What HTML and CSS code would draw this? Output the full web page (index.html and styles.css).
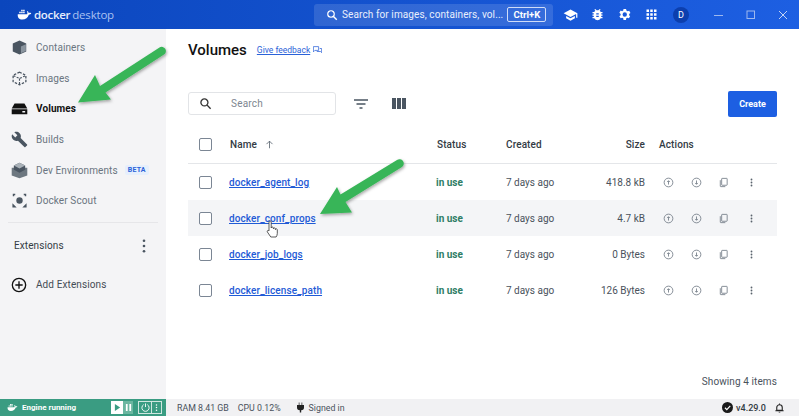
FILE: index.html
```html
<!DOCTYPE html>
<html lang="en">
<head>
<meta charset="utf-8">
<title>Docker Desktop - Volumes</title>
<link rel="stylesheet" href="styles.css">
</head>
<body>
<div class="app">
  <header class="topbar">
    <div class="brand">
      <svg class="whale" viewBox="0 0 20 14" width="15" height="11"><path fill="#fff" d="M1 6.500h12.600c.5-1.200.3-2.500-.4-3.500l.6-.6c1 .6 1.600 1.500 1.800 2.600 1-.4 2.300-.4 3.400.3-.6 1.300-1.800 1.900-3.300 1.900C14.700 11 11.500 13.500 7 13.500 3 13.500.6 11 1 6.500z"/><path fill="#fff" d="M3 3.200h2v2H3zM5.600 3.200h2v2h-2zM8.200 3.200h2v2h-2zM5.600.8h2v2h-2zM8.200.8h2v2h-2z"/></svg>
      <span class="brand-docker">docker</span><span class="brand-desktop">desktop</span>
    </div>
    <div class="searchbox">
      <svg class="ico" viewBox="0 0 24 24" width="12" height="12"><circle cx="10" cy="10" r="6.500" fill="none" stroke="#fff" stroke-width="2.400"/><path d="M14.500 14.500L21.500 21.500" stroke="#fff" stroke-width="2.800"/></svg>
      <span class="search-text">Search for images, containers, vol...</span>
      <span class="kbd">Ctrl+K</span>
    </div>
    <div class="top-icons">
      <svg viewBox="0 0 24 24" width="15" height="15"><path fill="#fff" d="M12 4L1 10l11 6 9-4.900V17h2v-7zM5 14.200v3.800l7 3.800 7-3.800v-3.800l-7 3.800z"/></svg>
      <svg viewBox="0 0 24 24" width="15" height="15"><path fill="#fff" d="M20 8h-2.800a6 6 0 0 0-1.800-2l1.600-1.600L15.600 3l-2.200 2.200a6 6 0 0 0-2.800 0L8.400 3 7 4.400 8.600 6a6 6 0 0 0-1.800 2H4v2h2.100a7 7 0 0 0 0 2H4v2h2.100c0 .7 0 1.300.1 2H4v2h2.800a6 6 0 0 0 10.400 0H20v-2h-2.200c.1-.7.200-1.300.2-2h2v-2h-2a7 7 0 0 0-.1-2H20zm-6 8h-4v-2h4zm0-4h-4v-2h4z"/></svg>
      <svg viewBox="0 0 24 24" width="15" height="15"><path fill="#fff" d="M19.400 13c0-.3.100-.7.100-1s0-.7-.1-1l2.100-1.600-2-3.500-2.500 1a7 7 0 0 0-1.700-1L14.400 3h-4l-.4 2.700a7 7 0 0 0-1.700 1l-2.500-1-2 3.500L5.900 11c0 .3-.1.700-.1 1s0 .7.100 1l-2.100 1.600 2 3.500 2.500-1a7 7 0 0 0 1.700 1l.4 2.700h4l.4-2.700a7 7 0 0 0 1.700-1l2.500 1 2-3.500zM12.400 15.500a3.500 3.500 0 1 1 0-7 3.500 3.500 0 0 1 0 7z"/></svg>
      <svg viewBox="0 0 24 24" width="15" height="15"><path fill="#fff" d="M4 4h4v4H4zM10 4h4v4h-4zM16 4h4v4h-4zM4 10h4v4H4zM10 10h4v4h-4zM16 10h4v4h-4zM4 16h4v4H4zM10 16h4v4h-4zM16 16h4v4h-4z"/></svg>
      <span class="avatar">D</span>
    </div>
    <div class="win-controls">
      <svg viewBox="0 0 12 12" width="12" height="12"><path d="M1 6.500h9" stroke="#9db8ee" stroke-width="1"/></svg>
      <svg viewBox="0 0 12 12" width="12" height="12"><rect x="2" y="2" width="7.500" height="7.500" fill="none" stroke="#9db8ee"/></svg>
      <svg viewBox="0 0 12 12" width="12" height="12"><path d="M2 2l8 8M10 2l-8 8" stroke="#c3d4f5" stroke-width="1"/></svg>
    </div>
  </header>

  <div class="middle">
    <aside class="sidebar">
      <nav class="nav">
        <a class="nav-item">
          <svg viewBox="0 0 24 24" width="17" height="17"><path fill="#4a5561" d="M12 2l9.500 4.500v11L12 22l-9.500-4.500v-11z"/><path fill="#8a949e" d="M14 10.500l7-3.200v9.500l-7 3.400z"/></svg>
          <span>Containers</span>
        </a>
        <a class="nav-item">
          <svg viewBox="0 0 24 24" width="17" height="17"><path fill="none" stroke="#4a5561" stroke-width="1.800" stroke-dasharray="3.500 2" d="M12 3l9 4.500v9L12 21l-9-4.500v-9z"/><path fill="none" stroke="#4a5561" stroke-width="1.600" stroke-dasharray="3 2" d="M3.500 8l8.500 4 8.500-4M12 12v8"/></svg>
          <span>Images</span>
        </a>
        <a class="nav-item active">
          <svg viewBox="0 0 24 24" width="17" height="17"><path fill="#111" d="M5 5h14l4 7H1z"/><path fill="#111" d="M1 13h22v7H1zM16 15.500v2h4v-2z" fill-rule="evenodd"/></svg>
          <span>Volumes</span>
        </a>
        <a class="nav-item">
          <svg viewBox="0 0 24 24" width="17" height="17"><path fill="#4a5561" d="M22.700 19l-9.100-9.100c.9-2.300.4-5-1.500-6.900-2-2-5-2.400-7.400-1.300L9 6 6 9 1.600 4.700C.4 7.100.9 10.100 2.900 12.100c1.900 1.900 4.600 2.400 6.900 1.500l9.100 9.100c.4.400 1 .4 1.400 0l2.300-2.300c.5-.4.500-1.100.1-1.400z"/></svg>
          <span>Builds</span>
        </a>
        <a class="nav-item">
          <svg viewBox="0 0 24 24" width="17" height="17"><path fill="#6d7780" d="M1 8h22v11l-11 4-11-4z"/><path fill="#4a5561" d="M12 1l8 4v6l-8 4-8-4V5z"/><path fill="#a9b1b8" d="M12 1l8 4-8 4-8-4z"/></svg>
          <span>Dev Environments</span>
          <span class="beta">BETA</span>
        </a>
        <a class="nav-item">
          <svg viewBox="0 0 24 24" width="17" height="17"><circle cx="12" cy="12" r="4.500" fill="#4a5561"/><path fill="none" stroke="#4a5561" stroke-width="2" d="M6 3.500H3.500V6M18 3.500h2.500V6"/><path fill="#4a5561" d="M2 22v-6l6 6zM22 22v-6l-6 6z"/></svg>
          <span>Docker Scout</span>
        </a>
      </nav>
      <hr class="divider">
      <div class="ext-head">
        <span>Extensions</span>
        <svg viewBox="0 0 4 16" width="4" height="14"><circle cx="2" cy="2" r="1.500" fill="#4a5561"/><circle cx="2" cy="8" r="1.500" fill="#4a5561"/><circle cx="2" cy="14" r="1.500" fill="#4a5561"/></svg>
      </div>
      <a class="add-ext">
        <svg viewBox="0 0 24 24" width="16" height="16"><circle cx="12" cy="12" r="10" fill="none" stroke="#111" stroke-width="2"/><path d="M12 6.500v11M6.500 12h11" stroke="#111" stroke-width="2"/></svg>
        <span>Add Extensions</span>
      </a>
    </aside>

    <main class="content">
      <div class="title-row">
        <h1>Volumes</h1>
        <a class="feedback">Give feedback</a>
        <svg class="fb-ico" viewBox="0 0 12 10" width="9" height="8"><path fill="none" stroke="#2b62d8" d="M.5.500h7v5h-5l-2 2zM9 3h2.500v5.500l-1.500-1.500H5"/></svg>
      </div>
      <div class="toolbar">
        <div class="search">
          <svg viewBox="0 0 24 24" width="13" height="13"><circle cx="10" cy="10" r="6.500" fill="none" stroke="#333" stroke-width="2.400"/><path d="M15 15l6.500 6.500" stroke="#333" stroke-width="2.600"/></svg>
          <span>Search</span>
        </div>
        <svg class="tool-filter" viewBox="0 0 14 10" width="14" height="10"><path d="M0 1h14M2.500 5h9M5.500 9h3" stroke="#4a5561" stroke-width="1.300"/></svg>
        <svg class="tool-cols" viewBox="0 0 14 11" width="14" height="11"><path fill="#4a5561" d="M0 0h4v11H0zM5 0h4v11H5zM10 0h4v11h-4z"/></svg>
        <button class="create">Create</button>
      </div>

      <div class="table">
        <div class="row head">
          <span class="check"></span>
          <span class="name-h">Name <svg viewBox="0 0 12 12" width="9" height="9"><path d="M6 11V1.500M2 5.500l4-4 4 4" fill="none" stroke="#5a6570" stroke-width="1.100"/></svg></span>
          <span class="status-h">Status</span>
          <span>Created</span>
          <span class="size">Size</span>
          <span class="actions-h">Actions</span>
        </div>
        <div class="row">
          <span class="check"></span>
          <a class="vol">docker_agent_log</a>
          <span class="inuse">in use</span>
          <span class="cell">7 days ago</span>
          <span class="size cell">418.8 kB</span>
          <span class="actions">
            <svg viewBox="0 0 24 24"><circle cx="12" cy="12" r="9.500" class="a"/><path d="M12 16.500v-8M9 11l3-3 3 3" class="a"/></svg>
            <svg viewBox="0 0 24 24"><circle cx="12" cy="12" r="9.500" class="a"/><path d="M12 7.500v8M9 13l3 3 3-3" class="a"/></svg>
            <svg viewBox="0 0 24 24"><rect x="8" y="3" width="12" height="15" rx="1" class="a"/><path d="M5 7v13a1 1 0 0 0 1 1h10" class="a"/></svg>
            <svg viewBox="0 0 24 24"><circle cx="12" cy="5.500" r="2" class="d"/><circle cx="12" cy="12" r="2" class="d"/><circle cx="12" cy="18.500" r="2" class="d"/></svg>
          </span>
        </div>
        <div class="row shaded">
          <span class="check"></span>
          <a class="vol">docker_conf_props</a>
          <span class="inuse">in use</span>
          <span class="cell">7 days ago</span>
          <span class="size cell">4.7 kB</span>
          <span class="actions">
            <svg viewBox="0 0 24 24"><circle cx="12" cy="12" r="9.500" class="a"/><path d="M12 16.500v-8M9 11l3-3 3 3" class="a"/></svg>
            <svg viewBox="0 0 24 24"><circle cx="12" cy="12" r="9.500" class="a"/><path d="M12 7.500v8M9 13l3 3 3-3" class="a"/></svg>
            <svg viewBox="0 0 24 24"><rect x="8" y="3" width="12" height="15" rx="1" class="a"/><path d="M5 7v13a1 1 0 0 0 1 1h10" class="a"/></svg>
            <svg viewBox="0 0 24 24"><circle cx="12" cy="5.500" r="2" class="d"/><circle cx="12" cy="12" r="2" class="d"/><circle cx="12" cy="18.500" r="2" class="d"/></svg>
          </span>
        </div>
        <div class="row">
          <span class="check"></span>
          <a class="vol">docker_job_logs</a>
          <span class="inuse">in use</span>
          <span class="cell">7 days ago</span>
          <span class="size cell">0 Bytes</span>
          <span class="actions">
            <svg viewBox="0 0 24 24"><circle cx="12" cy="12" r="9.500" class="a"/><path d="M12 16.500v-8M9 11l3-3 3 3" class="a"/></svg>
            <svg viewBox="0 0 24 24"><circle cx="12" cy="12" r="9.500" class="a"/><path d="M12 7.500v8M9 13l3 3 3-3" class="a"/></svg>
            <svg viewBox="0 0 24 24"><rect x="8" y="3" width="12" height="15" rx="1" class="a"/><path d="M5 7v13a1 1 0 0 0 1 1h10" class="a"/></svg>
            <svg viewBox="0 0 24 24"><circle cx="12" cy="5.500" r="2" class="d"/><circle cx="12" cy="12" r="2" class="d"/><circle cx="12" cy="18.500" r="2" class="d"/></svg>
          </span>
        </div>
        <div class="row">
          <span class="check"></span>
          <a class="vol">docker_license_path</a>
          <span class="inuse">in use</span>
          <span class="cell">7 days ago</span>
          <span class="size cell">126 Bytes</span>
          <span class="actions">
            <svg viewBox="0 0 24 24"><circle cx="12" cy="12" r="9.500" class="a"/><path d="M12 16.500v-8M9 11l3-3 3 3" class="a"/></svg>
            <svg viewBox="0 0 24 24"><circle cx="12" cy="12" r="9.500" class="a"/><path d="M12 7.500v8M9 13l3 3 3-3" class="a"/></svg>
            <svg viewBox="0 0 24 24"><rect x="8" y="3" width="12" height="15" rx="1" class="a"/><path d="M5 7v13a1 1 0 0 0 1 1h10" class="a"/></svg>
            <svg viewBox="0 0 24 24"><circle cx="12" cy="5.500" r="2" class="d"/><circle cx="12" cy="12" r="2" class="d"/><circle cx="12" cy="18.500" r="2" class="d"/></svg>
          </span>
        </div>
      </div>
      <div class="showing">Showing 4 items</div>
    </main>
  </div>

  <footer class="statusbar">
    <div class="engine">
      <svg viewBox="0 0 20 14" width="11" height="9"><path fill="#fff" d="M1 6.500h12.600c.5-1.200.3-2.500-.4-3.500l.6-.6c1 .6 1.600 1.500 1.800 2.600 1-.4 2.300-.4 3.400.3-.6 1.300-1.800 1.900-3.300 1.900C14.700 11 11.500 13.500 7 13.500 3 13.500.6 11 1 6.500z"/><path fill="#fff" d="M3 3.200h2v2H3zM5.600 3.200h2v2h-2zM8.200 3.200h2v2h-2zM5.600.8h2v2h-2zM8.200.8h2v2h-2z"/></svg>
      <span class="engine-text">Engine running</span>
      <div class="eng-btns">
        <span class="eb play"><svg viewBox="0 0 8 8" width="7" height="7"><path fill="#3a9c82" d="M1 0l6 4-6 4z"/></svg></span>
        <span class="eb pause"><svg viewBox="0 0 8 8" width="7" height="7"><path fill="#fff" d="M1 0h2v8H1zM5 0h2v8H5z"/></svg></span>
      </div>
      <div class="eng-btns outlined">
        <span class="eb"><svg viewBox="0 0 10 10" width="9" height="9"><path fill="none" stroke="#fff" d="M3 1.800a4 4 0 1 0 4 0M5 .5v4"/></svg></span>
        <span class="eb sep"><svg viewBox="0 0 4 10" width="3" height="9"><circle cx="2" cy="1.500" r="1" fill="#fff"/><circle cx="2" cy="5" r="1" fill="#fff"/><circle cx="2" cy="8.500" r="1" fill="#fff"/></svg></span>
      </div>
    </div>
    <span class="stat">RAM 8.41 GB</span>
    <span class="stat cpu">CPU 0.12%</span>
    <svg class="plug" viewBox="0 0 10 14" width="7" height="11"><path fill="#222" d="M2.500 0h1v3.500h3V0h1v3.500H10v3.500a4 4 0 0 1-4 4v3H4v-3a4 4 0 0 1-4-4V3.500h2.500z"/></svg>
    <span class="stat">Signed in</span>
    <div class="status-right">
      <svg viewBox="0 0 24 24" width="11" height="11"><circle cx="12" cy="12" r="12" fill="#1a1a1a"/><path d="M6.500 12.500l4 4 7.500-8" fill="none" stroke="#fff" stroke-width="2.600"/></svg>
      <span class="version">v4.29.0</span>
      <svg class="bell" viewBox="0 0 24 24" width="11" height="12"><path fill="none" stroke="#222" stroke-width="2.400" d="M6 17V11a6 6 0 0 1 12 0v6zM3 18h18"/><path fill="#222" d="M10 20h4a2 2 0 0 1-4 0zM11 2h2v3h-2z"/></svg>
    </div>
  </footer>

  <svg class="arrow-full" viewBox="0 0 799 416" width="799" height="416">
    <defs><filter id="sh2" x="-20%" y="-20%" width="140%" height="140%"><feDropShadow dx="1" dy="1.500" stdDeviation="1.500" flood-color="#000" flood-opacity=".35"/></filter></defs>
    <g filter="url(#sh2)" fill="#38b558">
      <path d="M78 102.500L95 75l5 11 59.500-38.500a4 4 0 0 1 4.500 7L105.500 92.500l5.500 7z"/>
      <path d="M320 214l17-27 3.500 7.500 56.500-34.500a4 4 0 0 1 5 7l-56.500 35 6.500 10.500z"/>
    </g>
    <path fill="#fff" stroke="#333" stroke-width=".8" d="M269 222c0-1.500 2.200-1.500 2.200 0v6c0-1.300 2.200-1.300 2.200 0v.8c0-1.200 2-1.200 2 0v.8c0-1.200 1.900-1 1.900.2v3.700c0 1.400-.6 2.500-1.200 3.500h-5.300l-3.400-5c-.8-1.200.8-2.200 1.600-1.100V222z"/>
  </svg>
</div>
</body>
</html>
```

FILE: styles.css
```css
* { box-sizing: border-box; }
html, body { margin: 0; height: 100%; }
body { font-family: Roboto, "Liberation Sans", sans-serif; font-size: 10px; color: #2a3038; background: #fff; overflow: hidden; }
.app { position: relative; width: 799px; height: 416px; display: flex; flex-direction: column; overflow: hidden; }

.topbar { height: 29px; flex: none; display: flex; align-items: center; background: linear-gradient(90deg, #0b46bd 0%, #1d5fe2 100%); color: #fff; }
.brand { width: 314px; flex: none; padding-left: 17px; display: flex; align-items: center; gap: 2px; }
.brand-docker { font-family: "Open Sans", sans-serif; font-size: 11.500px; font-weight: 600; color: #e6edfb; letter-spacing: -.3px; }
.brand-desktop { font-family: "Open Sans", sans-serif; font-size: 11.500px; color: #a9c1f1; letter-spacing: -.2px; }
.searchbox { width: 239px; height: 22px; flex: none; padding: 0 11px 0 12px; display: flex; align-items: center; gap: 4px; background: rgba(255,255,255,.13); border-radius: 3px; }
.ico { flex: none; }
.search-text { font-size: 10px; white-space: nowrap; color: #e9effc; flex: 1; letter-spacing: .1px; }
.kbd { height: 15px; width: 39px; flex: none; display: flex; align-items: center; justify-content: center; border: 1px solid #cfdcf8; border-radius: 2px; font-size: 9.500px; font-weight: 700; }
.top-icons { display: flex; align-items: center; margin-left: 10px; gap: 12px; }
.avatar { width: 16px; height: 16px; margin-left: 2px; border-radius: 50%; background: #0c3fae; font-size: 9px; display: flex; align-items: center; justify-content: center; }
.win-controls { display: flex; gap: 20px; margin-left: 24px; }

.middle { flex: 1; display: flex; min-height: 0; }
.sidebar { width: 166px; flex: none; background: #f4f4f6; padding: 3.500px 8px 0 0; }
.nav { display: flex; flex-direction: column; }
.nav-item { height: 30.600px; padding-left: 11px; display: flex; align-items: center; gap: 8px; color: #6a7480; font-size: 10px; letter-spacing: .1px; white-space: nowrap; }
.nav-item.active { color: #111; font-weight: 700; }
.beta { margin-left: -1px; padding: 1px 3px; background: #e6effc; color: #2b62d8; font-size: 7px; font-weight: 700; border-radius: 2px; letter-spacing: .2px; }
.divider { margin: 5.500px 0 0 8px; border: 0; border-top: 1px solid #e6e6e9; }
.ext-head { margin-top: 15px; padding: 0 12px 0 14px; display: flex; align-items: center; justify-content: space-between; color: #333b44; font-size: 10px; letter-spacing: .1px; height: 16px; }
.add-ext { margin-top: 23px; padding-left: 11px; display: flex; align-items: center; gap: 9px; color: #444c55; font-size: 10px; letter-spacing: .1px; height: 16px; }

.content { flex: 1; padding: 0 22px; display: flex; flex-direction: column; min-width: 0; }
.title-row { margin-top: 11px; height: 20px; display: flex; align-items: center; }
h1 { margin: 0; font-size: 15px; font-weight: 500; color: #111; }
.feedback { margin-left: 10px; font-size: 8.500px; color: #2b62d8; text-decoration: underline; }
.fb-ico { margin-left: 3px; }
.toolbar { margin-top: 31px; height: 25px; display: flex; align-items: center; }
.search { width: 148px; height: 23px; padding-left: 10px; display: flex; align-items: center; gap: 19px; background: #fff; border: 1px solid #e2e4e7; border-radius: 3px; color: #7d8690; font-size: 10px; letter-spacing: .2px; }
.tool-filter { margin-left: 18px; }
.tool-cols { margin-left: 24px; }
.create { margin-left: auto; width: 49px; height: 26px; border: 0; border-radius: 2px; background: #1d5fe2; color: #fff; font: 700 9px Roboto, sans-serif; }

.table { margin-top: 9px; }
.row { height: 36px; display: grid; grid-template-columns: 41px 207px 70px 78px 61px 132px; align-items: center; position: relative; color: #3a424c; font-size: 10px; }
.row.head { height: 39px; border-bottom: 1px solid #e4e6e9; font-weight: 500; color: #333b44; font-size: 10px; letter-spacing: .1px; }
.row.shaded { background: #f4f5f7; }
.check { width: 13px; height: 13px; margin-left: 11px; border: 1.500px solid #7b8694; border-radius: 2px; background: #fff; }
.name-h { padding-left: 1px; }
.name-h svg { margin-left: 5px; vertical-align: -1px; }
.status-h { padding-left: 1px; }
.vol { color: #1f5bd6; font-weight: 500; text-decoration: underline; font-size: 10px; letter-spacing: .1px; }
.inuse { color: #2e7d66; font-weight: 700; font-size: 10px; }
.cell { color: #4a525c; }
.size { text-align: right; }
.actions-h { padding-left: 14px; }
.actions { display: flex; align-items: center; padding-left: 18px; gap: 16.700px; }
.actions svg { width: 11px; height: 11px; flex: none; }
.a { fill: none; stroke: #6f7883; stroke-width: 1.800; }
.d { fill: #5a636d; }
.showing { margin-top: auto; margin-bottom: 12px; text-align: right; font-size: 10px; color: #4a525c; letter-spacing: .1px; }

.statusbar { height: 17px; flex: none; display: flex; align-items: center; background: #f1f1f3; color: #4a525c; font-size: 8.800px; }
.engine { width: 166px; height: 17px; flex: none; background: #3a9c82; color: #fff; display: flex; align-items: center; padding-left: 7px; font-size: 8px; font-weight: 700; }
.engine-text { margin-left: 4px; width: 89px; }
.eng-btns { display: flex; height: 13px; }
.eb { width: 12px; height: 13px; display: flex; align-items: center; justify-content: center; }
.play { background: #fff; }
.pause { background: #6bb6a0; width: 10px; }
.outlined { margin-left: 5px; border: 1px solid #cfe6df; width: 24px; }
.outlined .eb { height: 11px; width: 12px; }
.outlined .sep { width: 10px; border-left: 1px solid #cfe6df; }
.stat { margin-left: 11px; white-space: nowrap; }
.cpu { margin-left: 9px; }
.plug { margin-left: 16px; }
.plug + .stat { margin-left: 5px; }
.status-right { margin-left: auto; padding-right: 14.500px; display: flex; align-items: center; gap: 3px; }
.version { font-weight: 500; color: #333b44; font-size: 9px; }
.bell { margin-left: 4.500px; }

.arrow-full { position: absolute; left: 0; top: 0; pointer-events: none; }
```
